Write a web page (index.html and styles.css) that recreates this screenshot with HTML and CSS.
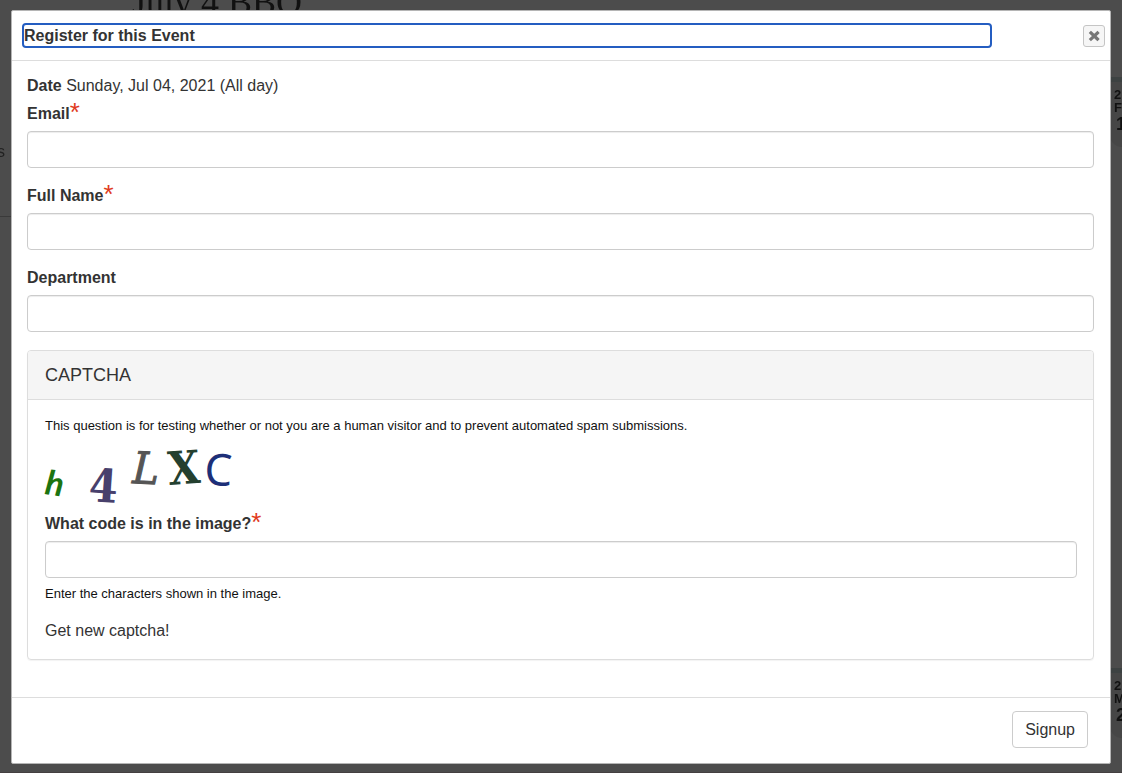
FILE: index.html
```html
<!DOCTYPE html>
<html lang="en">
<head>
    <meta charset="UTF-8">
    <meta name="viewport" content="width=device-width, initial-scale=1.0">
    <title>Register for this Event</title>
    <link rel="stylesheet" href="styles.css">
</head>
<body>
    <!-- Dimmed event page behind the dialog -->
    <div class="page" aria-hidden="true">
        <div class="page-title">July 4 BBQ</div>
        <div class="page-menu">s</div>
        <div class="page-date page-date-first"><span>2</span><span>F</span><span class="day">1</span></div>
        <div class="page-date page-date-second"><span>2</span><span>M</span><span class="day">2</span></div>
    </div>

    <div class="modal" role="dialog" aria-labelledby="modalTitle">
        <div class="modal-header">
            <h1 class="modal-title" id="modalTitle" tabindex="-1">Register for this Event</h1>
            <button class="close" type="button" aria-label="Close">
                <svg width="12" height="12" viewBox="0 0 12 12">
                    <path d="M3 3L9.4 9M9.4 3L3 9" stroke="#777" stroke-width="3.2" stroke-linecap="square"/>
                </svg>
            </button>
        </div>

        <form class="modal-form">
            <div class="modal-body">
                <p class="event-date"><strong>Date</strong> Sunday, Jul 04, 2021 (All day)</p>
                <div class="form-item">
                    <label for="email">Email<span class="required">*</span></label>
                    <input class="form-control" type="text" id="email">
                </div>
                <div class="form-item">
                    <label for="fullName">Full Name<span class="required">*</span></label>
                    <input class="form-control" type="text" id="fullName">
                </div>
                <div class="form-item">
                    <label for="department">Department</label>
                    <input class="form-control" type="text" id="department">
                </div>

                <section class="panel">
                    <h2 class="panel-heading">CAPTCHA</h2>
                    <div class="panel-body">
                        <p class="small-text">This question is for testing whether or not you are a human visitor and to prevent automated spam submissions.</p>
                        <svg class="captcha-image" width="200" height="60" viewBox="0 0 200 60" role="img" aria-label="Image CAPTCHA">
                            <text class="char-h" transform="translate(-1 50) rotate(8)">h</text>
                            <text class="char-4" transform="translate(43 57) rotate(4)">4</text>
                            <text class="char-l" transform="translate(87 39) rotate(3)">L</text>
                            <text class="char-x" transform="translate(124 41) rotate(-4)">X</text>
                            <text class="char-c" transform="translate(159 41) rotate(2)">C</text>
                        </svg>
                        <div class="form-item captcha-item">
                            <label for="captcha">What code is in the image?<span class="required">*</span></label>
                            <input class="form-control" type="text" id="captcha">
                        </div>
                        <p class="small-text help-text">Enter the characters shown in the image.</p>
                        <a class="reload" href="#">Get new captcha!</a>
                    </div>
                </section>
            </div>

            <div class="modal-footer">
                <button class="btn" type="submit">Signup</button>
            </div>
        </form>
    </div>
</body>
</html>
```
FILE: styles.css
```css
* {
    margin: 0;
    padding: 0;
    box-sizing: border-box;
}

body {
    font-family: "Liberation Sans", Arial, sans-serif;
    font-size: 16px;
    line-height: 24px;
    color: #333;
    background-color: #4c4c4c;
    padding: 10px 11px 8px;
}

/* Page behind the dialog */
.page {
    position: fixed;
    inset: 0;
    overflow: hidden;
    border-bottom: 1px solid #443f41;
}

.page-title {
    position: absolute;
    top: -16px;
    left: 132px;
    font-family: "Liberation Serif", "Times New Roman", serif;
    font-size: 36px;
    line-height: 36px;
    color: #111;
    white-space: nowrap;
}

.page-menu {
    position: absolute;
    top: 140px;
    left: 0;
    width: 12px;
    height: 77px;
    border-bottom: 1px solid #3a3a3a;
    color: #222;
    text-indent: -3px;
}

.page-date {
    position: absolute;
    right: 0;
    width: 12px;
    height: 70px;
    padding: 6px 0 0 4px;
    border-top: 5px solid #3d4242;
    border-bottom-left-radius: 12px;
    background-color: #464646;
    color: #111;
    font-size: 13px;
    font-weight: bold;
    line-height: 13px;
    overflow: hidden;
}

.page-date span {
    display: block;
}

.page-date .day {
    font-size: 18px;
    line-height: 20px;
    padding-left: 2px;
}

.page-date-first {
    top: 77px;
}

.page-date-second {
    top: 668px;
}

/* Dialog */
.modal {
    position: relative;
    background-color: #fff;
    border: 1px solid #b5b5b5;
    border-radius: 2px;
}

.modal-header {
    display: flex;
    align-items: center;
    justify-content: space-between;
    height: 50px;
    padding: 0 5px 0 10px;
    border-bottom: 1px solid #ddd;
}

.modal-title {
    width: 90%;
    max-width: 970px;
    height: 25px;
    font-size: 16px;
    line-height: 21px;
    border: 2px solid #245dc1;
    border-radius: 4px;
}

.close {
    display: flex;
    align-items: center;
    justify-content: center;
    width: 22px;
    height: 22px;
    background-color: #f6f6f6;
    border: 1px solid #c5c5c5;
    border-radius: 3px;
    cursor: pointer;
}

.modal-body {
    padding: 13px 16px 37px 15px;
}

.event-date {
    margin-bottom: 4px;
}

.form-item {
    margin-bottom: 16px;
}

label {
    display: block;
    font-weight: bold;
    line-height: 24px;
    margin-bottom: 5px;
}

.required {
    color: #e03a20;
    font-size: 26px;
    font-weight: normal;
    line-height: 0;
    vertical-align: -2px;
}

.form-control {
    display: block;
    width: 100%;
    height: 37px;
    padding: 6px 12px;
    font: inherit;
    color: #555;
    background-color: #fff;
    border: 1px solid #ccc;
    border-radius: 4px;
    box-shadow: inset 0 1px 1px rgba(0, 0, 0, 0.075);
}

.panel {
    margin-top: 18px;
    border: 1px solid #ddd;
    border-radius: 4px;
    box-shadow: 0 1px 1px rgba(0, 0, 0, 0.05);
}

.panel-heading {
    padding: 12px 17px;
    font-size: 18px;
    font-weight: normal;
    background-color: #f5f5f5;
    border-bottom: 1px solid #ddd;
    border-radius: 3px 3px 0 0;
}

.panel-body {
    padding: 17px 16px 16px 17px;
}

.small-text {
    font-size: 13px;
    line-height: 18px;
    color: #111;
}

.captcha-image {
    display: block;
    margin: 9px 0 8px;
    overflow: visible;
}

.char-h {
    font: italic bold 34px Lato, sans-serif;
    fill: #1c7410;
}

.char-4 {
    font: bold 46px "DejaVu Serif Condensed", "DejaVu Serif", serif;
    fill: #48406c;
}

.char-l {
    font: italic 44px "DejaVu Serif Condensed", "DejaVu Serif", serif;
    fill: #555;
    stroke: #555;
    stroke-width: 1px;
}

.char-x {
    font: bold 46px "DejaVu Serif Condensed", "DejaVu Serif", serif;
    fill: #24402f;
}

.char-c {
    font: 44px "Noto Sans", sans-serif;
    fill: #1d2f78;
}

.captcha-item {
    margin-bottom: 7px;
}

.help-text {
    margin-bottom: 16px;
}

.reload {
    display: block;
    color: #333;
    text-decoration: none;
}

.modal-footer {
    display: flex;
    justify-content: flex-end;
    padding: 13px 22px 15px;
    border-top: 1px solid #ddd;
}

.btn {
    height: 37px;
    padding: 0 12px;
    font: inherit;
    color: #333;
    background-color: #fff;
    border: 1px solid #ccc;
    border-radius: 4px;
    cursor: pointer;
}
```
